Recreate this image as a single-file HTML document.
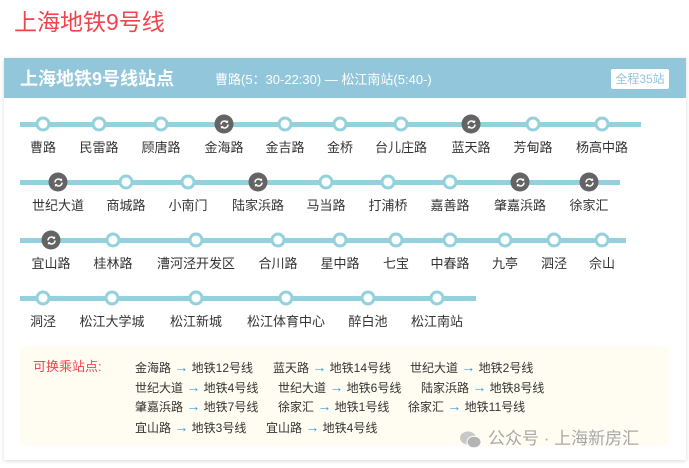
<!DOCTYPE html>
<html><head><meta charset="utf-8"><style>
body{margin:0;width:689px;height:468px;background:#fff;font-family:"Liberation Sans","Noto Sans CJK SC",sans-serif;position:relative;overflow:hidden}
.a{position:absolute;white-space:nowrap}
.title{left:14px;top:7px;font-size:23px;color:#f0454f;line-height:30px}
.card{left:4px;top:58px;width:682px;height:402px;background:#fff;box-shadow:0 1px 4px rgba(0,0,0,.15)}
.hd{left:4px;top:58px;width:682px;height:40px;background:#92c6db}
.line{position:absolute;height:5px;background:#93d2dc;left:20px}
.st{position:absolute;width:9px;height:9px;border:3px solid #93d2dc;background:#fff;border-radius:50%;transform:translate(-50%,-50%)}
.ic{position:absolute;width:19px;height:19px;background:#646464;border-radius:50%;transform:translate(-50%,-50%)}
.ic svg{position:absolute;left:3.5px;top:3.5px}
.lb{position:absolute;transform:translateX(-50%);font-size:13px;color:#333;white-space:nowrap;line-height:16px}
.box{left:20px;top:346px;width:649px;height:100px;background:#fffcf1}
.t{position:absolute;font-size:12px;color:#333;white-space:nowrap;line-height:16px}
.t b{font-weight:normal;color:#3a9be0;font-size:14px}
</style></head><body>
<div class="a title">上海地铁9号线</div>
<div class="a card"></div>
<div class="a hd"></div>
<div class="a" style="left:20px;top:68px;font-size:18px;font-weight:bold;color:#fff;line-height:22px">上海地铁9号线站点</div>
<div class="a" style="left:215px;top:71px;font-size:13px;color:#fff;line-height:18px">曹路(5：30-22:30) — 松江南站(5:40-)</div>
<div class="a" style="left:611px;top:69px;width:58px;height:20px;background:#fff;border-radius:2px;color:#92c6db;font-size:12px;line-height:20px;text-align:center">全程35站</div>
<div id="m"></div>
<div class="a box"></div>
<div class="a" style="left:33px;top:359px;font-size:13px;color:#f0454f;line-height:16px">可换乘站点:</div>
<div class="t" style="left:135px;top:359px">金海路 <b>→</b> 地铁12号线</div>
<div class="t" style="left:273px;top:359px">蓝天路 <b>→</b> 地铁14号线</div>
<div class="t" style="left:410px;top:359px">世纪大道 <b>→</b> 地铁2号线</div>
<div class="t" style="left:135px;top:379px">世纪大道 <b>→</b> 地铁4号线</div>
<div class="t" style="left:278px;top:379px">世纪大道 <b>→</b> 地铁6号线</div>
<div class="t" style="left:421px;top:379px">陆家浜路 <b>→</b> 地铁8号线</div>
<div class="t" style="left:135px;top:398px">肇嘉浜路 <b>→</b> 地铁7号线</div>
<div class="t" style="left:278px;top:398px">徐家汇 <b>→</b> 地铁1号线</div>
<div class="t" style="left:408px;top:398px">徐家汇 <b>→</b> 地铁11号线</div>
<div class="t" style="left:135px;top:419px">宜山路 <b>→</b> 地铁3号线</div>
<div class="t" style="left:266px;top:419px">宜山路 <b>→</b> 地铁4号线</div>
<svg class="a" style="left:460px;top:430px" width="22" height="20" viewBox="0 0 22 20"><ellipse cx="8" cy="8" rx="8" ry="6.5" fill="#c8c8c8"/><ellipse cx="14" cy="12" rx="7" ry="5.8" fill="#b4b4b4" stroke="#fff" stroke-width="1"/></svg>
<div class="a" style="left:488px;top:428px;font-size:17px;color:#a8a8a8;line-height:22px">公众号 · 上海新房汇</div>
<script>
var rows=[
[124,641,[[43,"曹路"],[99,"民雷路"],[161,"顾唐路"],[224,"金海路",1],[285,"金吉路"],[340,"金桥"],[401,"台儿庄路"],[471,"蓝天路",1],[533,"芳甸路"],[602,"杨高中路"]]],
[182,620,[[58,"世纪大道",1],[126,"商城路"],[188,"小南门"],[258,"陆家浜路",1],[326,"马当路"],[388,"打浦桥"],[450,"嘉善路"],[520,"肇嘉浜路",1],[589,"徐家汇",1]]],
[240,626,[[51,"宜山路",1],[113,"桂林路"],[196,"漕河泾开发区"],[278,"合川路"],[340,"星中路"],[396,"七宝"],[450,"中春路"],[505,"九亭"],[554,"泗泾"],[602,"佘山"]]],
[298,476,[[43,"洞泾"],[112,"松江大学城"],[196,"松江新城"],[286,"松江体育中心"],[368,"醉白池"],[437,"松江南站"]]]];
var h="";
rows.forEach(function(r){
h+='<div class="line" style="top:'+(r[0]-2.5)+'px;width:'+(r[1]-20)+'px"></div>';
r[2].forEach(function(s){
if(s[2])h+='<div class="ic" style="left:'+s[0]+'px;top:'+r[0]+'px"><svg width="12" height="12" viewBox="0 0 12 12"><path d="M2.5 6a3.5 3.5 0 0 1 6.2-2.2M9.5 6a3.5 3.5 0 0 1-6.2 2.2" fill="none" stroke="#fff" stroke-width="1.5"/><path d="M9.6 1.6v2.8H6.8z M2.4 10.4V7.6h2.8z" fill="#fff"/></svg></div>';
else h+='<div class="st" style="left:'+s[0]+'px;top:'+r[0]+'px"></div>';
h+='<div class="lb" style="left:'+s[0]+'px;top:'+(r[0]+16)+'px">'+s[1]+'</div>';
});});
document.getElementById("m").innerHTML=h;
</script>
</body></html>
